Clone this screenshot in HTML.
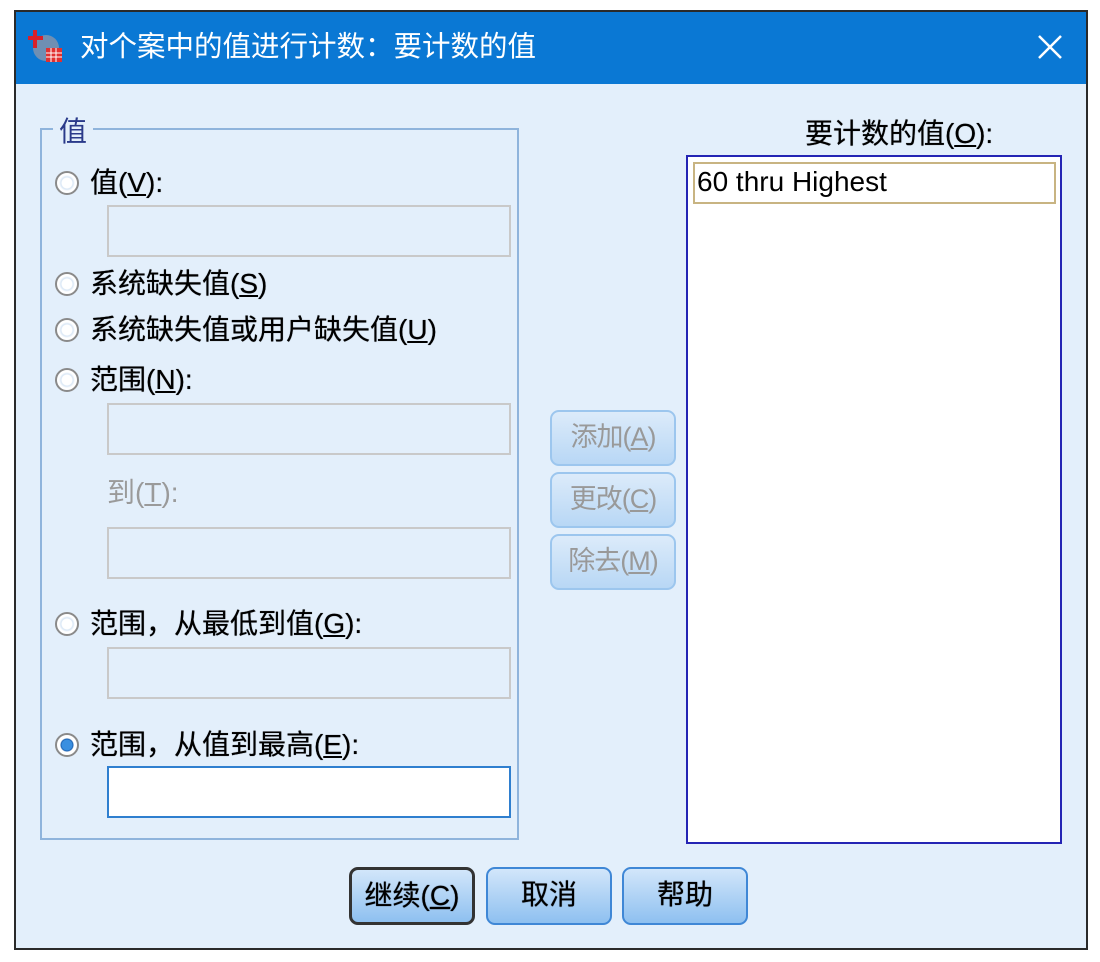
<!DOCTYPE html>
<html><head><meta charset="utf-8"><style>
body{margin:0;width:1100px;height:962px;background:#fff;position:relative;overflow:hidden;font-family:"Liberation Sans","Noto Sans CJK SC",sans-serif;}
.a{position:absolute;}
#dlg{left:14px;top:10px;width:1070px;height:936px;border:2px solid #2a2a2a;background:#e3effb;}
#tb{left:16px;top:12px;width:1070px;height:72px;background:#0a78d4;}
.t{font-size:28px;color:#000;white-space:nowrap;line-height:32px;text-shadow:0 0 0.6px #000;}
.rad{width:20px;height:20px;border-radius:50%;border:2px solid #8a8a8a;background:radial-gradient(circle,#fff 0 5px,#d8e6f5 6px,#fff 8px);}
.rad.on{background:radial-gradient(circle,#3a8fe0 0 5px,#1a5fb0 6px,#fff 7px);}
.box{border:2px solid #c9c9c9;width:400px;height:48px;left:107px;}
.btn{border:2px solid #9cc6ee;border-radius:9px;background:linear-gradient(#dcebfa,#b8d7f5);color:#999;font-size:27px;text-align:center;line-height:50px;white-space:nowrap;letter-spacing:-1px;}
.bb{border:2px solid #3f87d6;border-radius:9px;background:linear-gradient(#d2e6fa,#8ec0f0);color:#000;font-size:28px;text-align:center;line-height:52px;text-shadow:0 0 0.8px #000;}
u{text-decoration:underline;}
</style></head><body>
<div class="a" id="dlg"></div>
<div class="a" id="tb"></div>
<svg class="a" style="left:28px;top:28px" width="40" height="40" viewBox="0 0 40 40">
<circle cx="18" cy="20" r="13" fill="#6f8fb3"/><rect x="5" y="2" width="4" height="18" fill="#d8202a"/><rect x="0" y="8" width="15" height="4" fill="#d8202a"/>
<rect x="18" y="20" width="16" height="14" fill="#e23030"/><path d="M18 25h16M18 29h16M23 20v14M28 20v14" stroke="#fff" stroke-width="1"/></svg>
<div class="a t" style="left:80px;top:31px;color:#fff;font-size:28.5px;text-shadow:none">对个案中的值进行计数：要计数的值</div>
<svg class="a" style="left:1037px;top:34px" width="26" height="26"><path d="M2 2L24 24M24 2L2 24" stroke="#fff" stroke-width="2.5"/></svg>

<div class="a" style="left:40px;top:128px;width:475px;height:708px;border:2px solid #8fb4dc;"></div>
<div class="a t" style="left:53px;top:116px;background:#e3effb;padding:0 6px;color:#2a3a8a;text-shadow:none">值</div>

<div class="a rad" style="left:55px;top:171px"></div><div class="a t" style="left:90px;top:167px">值(<u>V</u>):</div>
<div class="a box" style="top:205px"></div>
<div class="a rad" style="left:55px;top:272px"></div><div class="a t" style="left:90px;top:268px">系统缺失值(<u>S</u>)</div>
<div class="a rad" style="left:55px;top:318px"></div><div class="a t" style="left:90px;top:314px">系统缺失值或用户缺失值(<u>U</u>)</div>
<div class="a rad" style="left:55px;top:368px"></div><div class="a t" style="left:90px;top:364px">范围(<u>N</u>):</div>
<div class="a box" style="top:403px"></div>
<div class="a t" style="left:107px;top:477px;color:#9a9a9a;text-shadow:none">到(<u>T</u>):</div>
<div class="a box" style="top:527px"></div>
<div class="a rad" style="left:55px;top:612px"></div><div class="a t" style="left:90px;top:608px">范围，从最低到值(<u>G</u>):</div>
<div class="a box" style="top:647px"></div>
<div class="a rad on" style="left:55px;top:733px"></div><div class="a t" style="left:90px;top:729px">范围，从值到最高(<u>E</u>):</div>
<div class="a" style="left:107px;top:766px;width:400px;height:48px;border:2px solid #2f7fcf;background:#fff"></div>

<div class="a btn" style="left:550px;top:410px;width:122px;height:52px">添加(<u>A</u>)</div>
<div class="a btn" style="left:550px;top:472px;width:122px;height:52px">更改(<u>C</u>)</div>
<div class="a btn" style="left:550px;top:534px;width:122px;height:52px">除去(<u>M</u>)</div>

<div class="a t" style="left:805px;top:118px">要计数的值(<u>O</u>):</div>
<div class="a" style="left:686px;top:155px;width:372px;height:685px;border:2px solid #2424b4;background:#fff"></div>
<div class="a" style="left:693px;top:162px;width:359px;height:38px;border:2px solid #c8b482;"></div>
<div class="a t" style="left:697px;top:166px;font-size:28px;text-shadow:none">60 thru Highest</div>

<div class="a bb" style="left:349px;top:867px;width:120px;height:52px;border-color:#333;border-width:3px">继续(<u>C</u>)</div>
<div class="a bb" style="left:486px;top:867px;width:122px;height:54px">取消</div>
<div class="a bb" style="left:622px;top:867px;width:122px;height:54px">帮助</div>
</body></html>
